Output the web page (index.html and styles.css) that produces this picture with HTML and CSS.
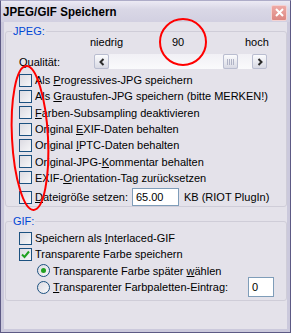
FILE: index.html
```html
<!DOCTYPE html>
<html lang="de">
<head>
    <meta charset="UTF-8">
    <title>JPEG/GIF Speichern</title>
    <link rel="stylesheet" href="styles.css">
</head>
<body>
    <div class="window">
        <div class="titlebar">
            <span class="title">JPEG/GIF Speichern</span>
            <span class="close-btn">
                <svg width="11" height="11" viewBox="0 0 11 11"><path d="M2 2 L9 9 M9 2 L2 9" stroke="#fff" stroke-width="2"/></svg>
            </span>
        </div>

        <div class="dlg-body">
            <!-- JPEG -->
            <fieldset class="group group-jpeg">
                <legend>JPEG:</legend>
                <div class="scale-labels">
                    <span>niedrig</span>
                    <span>90</span>
                    <span>hoch</span>
                </div>
                <div class="quality-row">
                    <span class="quality-label">Qualität:</span>
                    <div class="slider">
                        <span class="sl-btn">
                            <svg width="8" height="8" viewBox="0 0 8 8"><path d="M5.5 1 L2.5 4 L5.5 7" fill="none" stroke="#2b2b2b" stroke-width="2"/></svg>
                        </span>
                        <span class="sl-track"></span>
                        <span class="sl-thumb"><i></i><i></i><i></i><i></i></span>
                        <span class="sl-track sl-track-end"></span>
                        <span class="sl-btn">
                            <svg width="8" height="8" viewBox="0 0 8 8"><path d="M2.5 1 L5.5 4 L2.5 7" fill="none" stroke="#2b2b2b" stroke-width="2"/></svg>
                        </span>
                    </div>
                </div>

                <ul class="opt-list">
                    <li class="opt"><span class="chk"></span><span>Als <u>P</u>rogressives-JPG speichern</span></li>
                    <li class="opt"><span class="chk"></span><span>Als <u>G</u>raustufen-JPG speichern (bitte MERKEN!)</span></li>
                    <li class="opt"><span class="chk"></span><span><u>F</u>arben-Subsampling deaktivieren</span></li>
                    <li class="opt"><span class="chk"></span><span>Original <u>E</u>XIF-Daten behalten</span></li>
                    <li class="opt"><span class="chk"></span><span>Original <u>I</u>PTC-Daten behalten</span></li>
                    <li class="opt"><span class="chk"></span><span>Original-JPG-<u>K</u>ommentar behalten</span></li>
                    <li class="opt"><span class="chk"></span><span>EXIF-<u>O</u>rientation-Tag zurücksetzen</span></li>
                    <li class="opt opt-size">
                        <span class="chk"></span><span><u>D</u>ateigröße setzen:</span>
                        <span class="txt-input size-input">65.00</span>
                        <span>KB (RIOT PlugIn)</span>
                    </li>
                </ul>
            </fieldset>

            <!-- GIF -->
            <fieldset class="group group-gif">
                <legend>GIF:</legend>
                <ul class="opt-list">
                    <li class="opt"><span class="chk"></span><span>Speichern als <u>I</u>nterlaced-GIF</span></li>
                    <li class="opt"><span class="chk checked">
                        <svg width="9" height="9" viewBox="0 0 9 9"><path d="M1 4.5 L3.5 7 L8 1.5" fill="none" stroke="#21a121" stroke-width="2"/></svg>
                    </span><span>Transparente Farbe speichern</span></li>
                    <li class="opt opt-radio"><span class="radio on"></span><span>Transparente Farbe später <u>w</u>ählen</span></li>
                    <li class="opt opt-radio">
                        <span class="radio"></span><span><u>T</u>ransparenter Farbpaletten-Eintrag:</span>
                        <span class="txt-input idx-input">0</span>
                    </li>
                </ul>
            </fieldset>
        </div>

        <!-- red marks drawn over the dialog -->
        <svg class="marks" width="291" height="333" viewBox="0 0 291 333">
            <ellipse cx="183" cy="42" rx="23" ry="23" fill="none" stroke="#f00" stroke-width="2"/>
            <ellipse cx="30" cy="138" rx="18" ry="72" transform="rotate(-3 30 138)" fill="none" stroke="#f00" stroke-width="2"/>
        </svg>
    </div>
</body>
</html>
```

FILE: styles.css
```css
html, body, div, ul, li{
    margin: 0; padding: 0;
    list-style: none;
}
body{
    font-family: 'Liberation Sans', Arial, sans-serif;
    font-size: 11px;
    color: #000;
    background: #fff;
}

.window{
    position: relative;
    box-sizing: border-box;
    width: 291px;
    height: 333px;
    border: 1px solid #5d5a85;
    border-top-color: #aeacc8;
    background-color: #e4e2ea;
    padding: 0 3px 3px 3px;
    box-shadow: inset 3px 0 0 #cbc9dc, inset -3px 0 0 #cbc9dc, inset 0 -3px 0 #cbc9dc;
}

/* title bar */
.titlebar{
    display: flex;
    align-items: center;
    justify-content: space-between;
    height: 21px;
    margin: 0 -3px;
    padding: 0 3px 0 2px;
    background: linear-gradient(#eceaf4, #d9d7e6 40%, #d2d0e1);
}
.titlebar .title{
    font-weight: bold;
    font-size: 11.5px;
    letter-spacing: 0.1px;
    transform: scaleY(1.12);
}
.close-btn{
    display: flex;
    align-items: center;
    justify-content: center;
    width: 14px;
    height: 14px;
    margin-top: 2px;
    border: 1px solid #f4d2d2;
    border-radius: 2px;
    background: linear-gradient(#eea9a5, #dc8782);
}

/* group box */
.group{
    margin: 3px 0 0 1px;
    padding: 0;
    min-width: 0;
    border: 1px solid #cfcdd8;
    border-radius: 3px;
}
.group legend{
    margin-left: 6px;
    padding: 0 1px;
    line-height: 12px;
    color: #0046d5;
}
.group-jpeg{ height: 182px; box-sizing: border-box; }
.group-gif{ margin-top: 8px; height: 86px; box-sizing: border-box; }

.scale-labels{
    display: grid;
    grid-template-columns: 82px 73px auto;
    height: 13px;
    line-height: 13px;
    margin-top: -1px;
    padding-left: 84px;
}

/* slider */
.quality-row{
    display: flex;
    align-items: center;
    height: 15px;
    margin-top: 5px;
    padding-left: 13px;
}
.quality-label{ width: 75px; }
.slider{
    display: flex;
    height: 15px;
    width: 173px;
}
.sl-btn,
.sl-thumb{
    box-sizing: border-box;
    display: flex;
    align-items: center;
    justify-content: center;
    width: 15px;
    height: 15px;
    border: 1px solid #b9bdd0;
    border-radius: 2px;
    background: linear-gradient(#fbfbfd, #e6e7ee 60%, #d8d9e4);
}
.sl-track{
    width: 114px;
    background: linear-gradient(#f1f0f5, #fafafc);
}
.sl-track-end{ width: 14px; }
.sl-thumb{ gap: 1px; }
.sl-thumb i{
    display: block;
    width: 1px;
    height: 6px;
    background: #b0b3c6;
}

/* options */
.opt-list{ margin-top: 3px; }
.opt{
    display: flex;
    align-items: center;
    height: 16.3px;
    padding-left: 13px;
    white-space: nowrap;
}
.chk{
    box-sizing: border-box;
    display: flex;
    align-items: center;
    justify-content: center;
    flex: none;
    width: 13px;
    height: 13px;
    margin-right: 3px;
    border: 1px solid #1c5180;
    background: linear-gradient(135deg, #dcdbe2, #f6f6f8);
}
.opt-size{ height: 20px; margin-top: 1px; }
.txt-input{
    box-sizing: border-box;
    display: flex;
    align-items: center;
    height: 18px;
    padding-left: 3px;
    border: 1px solid #7f9db9;
    background: #fff;
}
.size-input{ width: 47px; margin: 0 5px 0 4px; }

.group-gif .opt-list{ margin-top: 3px; }
.opt-radio{ padding-left: 31px; }
.radio{
    box-sizing: border-box;
    display: flex;
    align-items: center;
    justify-content: center;
    flex: none;
    width: 13px;
    height: 13px;
    margin-right: 3px;
    border: 1px solid #1c5180;
    border-radius: 50%;
    background: linear-gradient(135deg, #dcdbe2, #f8f8fa);
}
.radio.on:after{
    content: '';
    width: 5px;
    height: 5px;
    border-radius: 50%;
    background: #21a121;
}
.idx-input{ width: 26px; height: 20px; margin-left: auto; margin-right: 12px; }

.marks{
    position: absolute;
    left: -1px;
    top: -1px;
    pointer-events: none;
}
```
